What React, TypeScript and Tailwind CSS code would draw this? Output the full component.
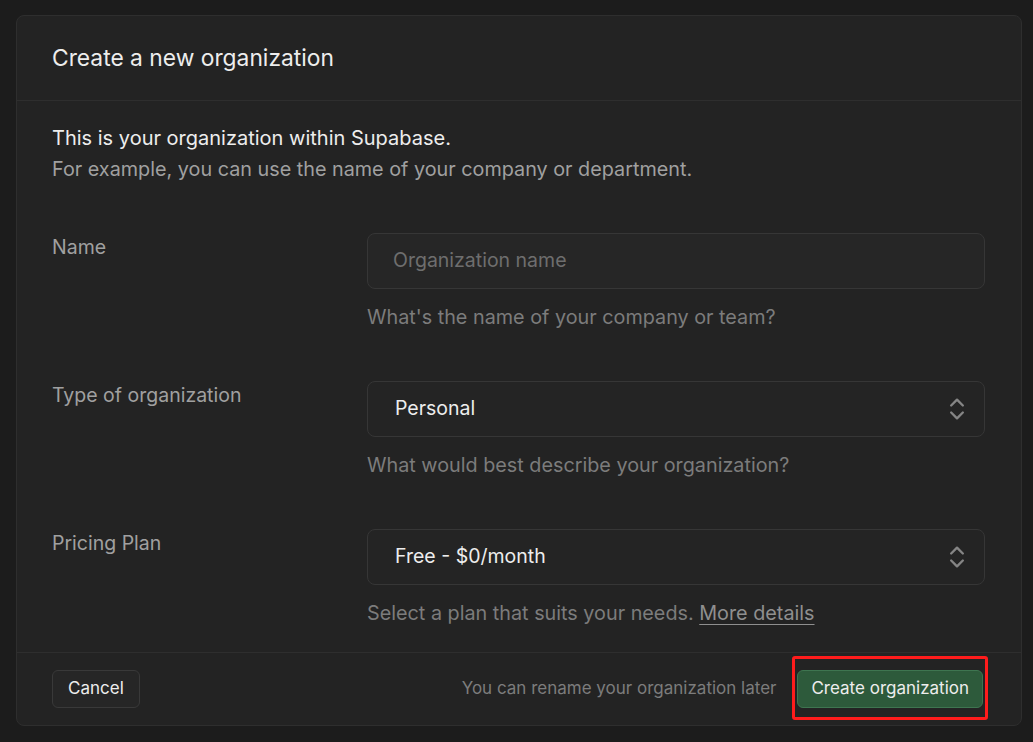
import React from "react";
import { ChevronsUpDown } from "lucide-react";

const font = { fontFamily: "Inter, 'Noto Sans', sans-serif" };

function Row({
  label,
  children,
  help,
  className = "",
}: {
  label: string;
  children: React.ReactNode;
  help: React.ReactNode;
  className?: string;
}) {
  return (
    <div className={`flex ${className}`}>
      <div className="w-[315px] shrink-0 text-[19.5px] leading-[28px] text-[#a0a0a0]">{label}</div>
      <div className="flex-1">
        {children}
        <div className="mt-[15px] text-[19.8px] leading-[26px] text-[#7c7c7c]">{help}</div>
      </div>
    </div>
  );
}

function Select({ value }: { value: string }) {
  return (
    <div className="flex h-[56px] items-center justify-between rounded-[8px] border border-[#363636] bg-[#242424] pl-[27px] pr-[13px]">
      <span className="text-[19.5px] text-[#ededed]">{value}</span>
      <ChevronsUpDown size={28} strokeWidth={2} className="text-[#858585]" />
    </div>
  );
}

export default function App() {
  return (
    <div className="min-h-[742px] w-full bg-[#1c1c1c] px-[16px] pt-[15px]" style={font}>
      <div className="flex h-[711px] w-[1006px] flex-col rounded-[8px] border border-[#2e2e2e] bg-[#232323]">
        <div className="flex h-[85px] items-center border-b border-[#2e2e2e] px-[35px]">
          <h1 className="text-[22.8px] text-[#ededed]">Create a new organization</h1>
        </div>
        <div className="flex-1 pl-[35px] pr-[36px] pt-[22px]">
          <p className="text-[20px] leading-[31px] text-[#ededed]">This is your organization within Supabase.</p>
          <p className="text-[19.8px] leading-[31px] text-[#a0a0a0]">
            For example, you can use the name of your company or department.
          </p>
          <Row label="Name" help="What's the name of your company or team?" className="mt-[48px]">
            <div className="flex h-[56px] items-center rounded-[8px] border border-[#363636] bg-[#262626] pl-[25px]">
              <span className="text-[19.5px] text-[#6e6e6e]">Organization name</span>
            </div>
          </Row>
          <Row label="Type of organization" help="What would best describe your organization?" className="mt-[51px]">
            <Select value="Personal" />
          </Row>
          <Row
            label="Pricing Plan"
            className="mt-[51px]"
            help={
              <>
                Select a plan that suits your needs.{" "}
                <span className="text-[#8f8f8f] underline underline-offset-[4px]">More details</span>
              </>
            }
          >
            <Select value="Free - $0/month" />
          </Row>
        </div>
        <div className="flex h-[73px] items-center justify-between border-t border-[#2e2e2e] pl-[35px] pr-[38px]">
          <button className="h-[38px] rounded-[6px] border border-[#393939] bg-[#262626] px-[15px] text-[17px] text-[#ededed]">
            Cancel
          </button>
          <div className="flex items-center gap-[21px]">
            <span className="text-[17px] text-[#7c7c7c]">You can rename your organization later</span>
            <div className="relative">
              <button className="h-[38px] rounded-[6px] border border-[#3e7550] bg-[#2d5a3b] px-[13px] text-[17px] text-[#ededed]">
                Create organization
              </button>
              <div className="pointer-events-none absolute -left-[5px] -right-[5px] -top-[14px] -bottom-[12px] rounded-[3px] border-[3px] border-[#ff1c1c]" />
            </div>
          </div>
        </div>
      </div>
    </div>
  );
}
